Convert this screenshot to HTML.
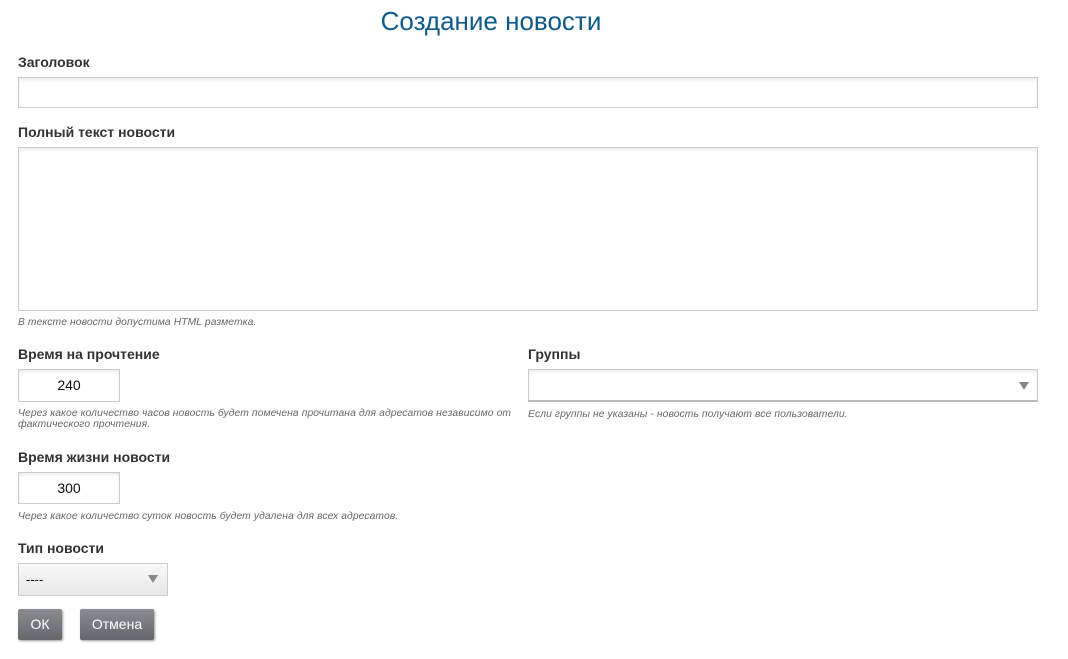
<!DOCTYPE html>
<html><head><meta charset="utf-8"><style>
body{margin:0;width:1068px;height:659px;background:#fff;font-family:"Liberation Sans",sans-serif;position:relative;overflow:hidden}
h1{position:absolute;left:0;width:982px;top:6px;margin:0;text-align:center;font-weight:normal;font-size:26px;color:#0e5a8a}
.l{position:absolute;font-weight:bold;font-size:14px;color:#333}
.box{position:absolute;border:1px solid #ccc;box-sizing:border-box;background:#fff;box-shadow:inset 0 2px 3px rgba(0,0,0,.08)}
.h{position:absolute;font-style:italic;font-size:10.3px;letter-spacing:0.1px;color:#666;line-height:11px}
.num{text-align:center;font-size:14px;line-height:30px;color:#111}
.btn{position:absolute;top:609px;height:31px;background:linear-gradient(#8a8c91,#64666b);color:#fff;font-size:14px;line-height:31px;text-align:center;border-radius:2px;box-shadow:1px 1px 2px rgba(0,0,0,.4)}
.tri{position:absolute;width:0;height:0;border-left:5px solid transparent;border-right:5px solid transparent;border-top:8px solid #888}
</style></head><body>
<h1>Создание новости</h1>
<div class="l" style="left:18px;top:54px">Заголовок</div>
<div class="box" style="left:18px;top:77px;width:1020px;height:31px"></div>
<div class="l" style="left:18px;top:124px">Полный текст новости</div>
<div class="box" style="left:18px;top:147px;width:1020px;height:164px"></div>
<div class="h" style="left:18px;top:317px">В тексте новости допустима HTML разметка.</div>
<div class="l" style="left:18px;top:346px">Время на прочтение</div>
<div class="box num" style="left:18px;top:369px;width:102px;height:33px">240</div>
<div class="h" style="left:18px;top:408px;width:500px">Через какое количество часов новость будет помечена прочитана для адресатов независимо от фактического прочтения.</div>
<div class="l" style="left:528px;top:346px">Группы</div>
<div class="box" style="left:528px;top:369px;width:510px;height:33px;border-bottom:2px solid #bbb"></div>
<div class="tri" style="left:1019px;top:382px"></div>
<div class="h" style="left:528px;top:409px">Если группы не указаны - новость получают все пользователи.</div>
<div class="l" style="left:18px;top:449px">Время жизни новости</div>
<div class="box num" style="left:18px;top:472px;width:102px;height:32px">300</div>
<div class="h" style="left:18px;top:511px">Через какое количество суток новость будет удалена для всех адресатов.</div>
<div class="l" style="left:18px;top:540px">Тип новости</div>
<div class="box" style="left:18px;top:563px;width:150px;height:33px;background:linear-gradient(#f8f8f8,#e8e8e8);box-shadow:none;font-size:13px;line-height:31px;padding-left:7px">----</div>
<div class="tri" style="left:148px;top:575px"></div>
<div class="btn" style="left:18px;width:44px">ОК</div>
<div class="btn" style="left:80px;width:74px">Отмена</div>
</body></html>
